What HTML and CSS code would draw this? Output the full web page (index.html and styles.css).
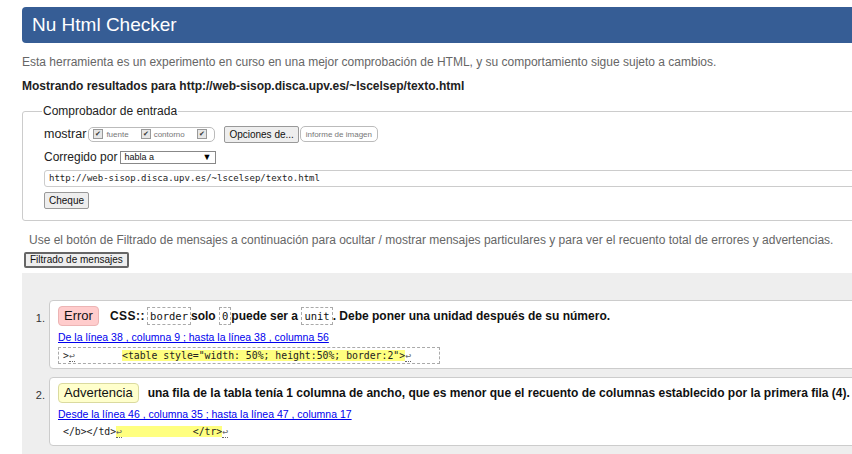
FILE: index.html
```html
<!DOCTYPE html>
<html lang="es">
<head>
<meta charset="utf-8">
<title>Nu Html Checker</title>
<link rel="stylesheet" href="styles.css">
</head>
<body>
<div class="page">
  <h1 class="banner">Nu Html Checker</h1>
  <p class="intro">Esta herramienta es un experimento en curso en una mejor comprobación de HTML, y su comportamiento sigue sujeto a cambios.</p>
  <p class="showing">Mostrando resultados para http://web-sisop.disca.upv.es/~lscelsep/texto.html</p>
  <fieldset class="input-box">
    <legend>Comprobador de entrada</legend>
    <div class="row first">
      <span class="lbl big">mostrar</span>
      <span class="pill checks">
        <label class="chk"><span class="cb">✔</span>fuente</label>
        <label class="chk"><span class="cb">✔</span>contorno</label>
        <label class="chk"><span class="cb">✔</span></label>
      </span>
      <button class="btn">Opciones de...</button>
      <span class="pill img">informe de imagen</span>
    </div>
    <div class="row">
      <span class="lbl">Corregido por</span>
      <span class="select">habla a<span class="arrow">▼</span></span>
    </div>
    <div class="url">http://web-sisop.disca.upv.es/~lscelsep/texto.html</div>
    <button class="btn small">Cheque</button>
  </fieldset>
  <p class="hint">Use el botón de Filtrado de mensajes a continuación para ocultar / mostrar mensajes particulares y para ver el recuento total de errores y advertencias.</p>
  <button class="btn filter">Filtrado de mensajes</button>
  <div class="results">
    <ol class="msgs">
      <li class="msg">
        <span class="num">1.</span>
        <div class="card">
          <p class="title"><span class="badge err">Error</span><span class="text"><b class="css">CSS::</b><code class="cd">border</code>solo <code class="cd">0</code>puede ser a <code class="cd">unit</code>. Debe poner una unidad después de su número.</span></p>
          <p class="loc"><a href="#">De la línea 38 , columna 9 ; hasta la línea 38 , columna 56</a></p>
          <div class="extract dashed">&gt;<span class="lf">↩</span>        <mark>&lt;table style="width: 50%; height:50%; border:2"&gt;</mark><span class="lf">↩</span></div>
        </div>
      </li>
      <li class="msg">
        <span class="num">2.</span>
        <div class="card">
          <p class="title"><span class="badge warn">Advertencia</span><span class="text">una fila de la tabla tenía 1 columna de ancho, que es menor que el recuento de columnas establecido por la primera fila (4).</span></p>
          <p class="loc"><a href="#">Desde la línea 46 , columna 35 ; hasta la línea 47 , columna 17</a></p>
          <div class="extract plain">&lt;/b&gt;&lt;/td&gt;<mark><span class="lf">↩</span>            &lt;/tr&gt;</mark><span class="lf">↩</span></div>
        </div>
      </li>
    </ol>
  </div>
</div>
</body>
</html>
```

FILE: styles.css
```css
html, body {
  margin: 0;
  padding: 0;
  background: #fff;
  overflow: hidden;
}
body {
  font-family: "Liberation Sans", Arial, sans-serif;
  font-size: 12px;
  color: #222;
}
.page {
  width: 900px;
  padding: 7px 0 0 22px;
}
.banner {
  margin: 0;
  background: #365d95;
  color: #fff;
  font-weight: normal;
  font-size: 19px;
  height: 36px;
  line-height: 36px;
  padding-left: 10px;
  border-radius: 4px 0 0 4px;
}
.intro {
  margin: 11px 0 0;
  color: #666;
  line-height: 16px;
}
.showing {
  margin: 8px 0 0;
  font-weight: bold;
  color: #222;
  line-height: 16px;
}
.input-box {
  margin: 10px 0 0;
  border: 1px solid #ccc;
  border-radius: 3px;
  padding: 7px 20px 11px 21px;
  box-sizing: border-box;
  height: 117px;
}
.input-box legend {
  font-size: 12px;
  color: #222;
  padding: 0 1px;
  margin-left: -2px;
}
.row {
  display: flex;
  align-items: center;
  height: 18px;
  margin-bottom: 6px;
}
.row.first { margin-bottom: 5px; }
.lbl {
  font-size: 12px;
  color: #222;
  margin-right: 2px;
}
.lbl.big { font-size: 12.5px; }
.pill {
  display: inline-flex;
  align-items: center;
  border: 1px solid #bbb;
  border-radius: 5px;
  height: 15px;
  box-sizing: border-box;
  font-size: 8px;
  color: #777;
}
.checks {
  width: 127px;
  padding-left: 4px;
}
.chk {
  display: inline-flex;
  align-items: center;
  margin-right: 12px;
}
.chk:last-child { margin-right: 0; }
.cb {
  display: inline-block;
  width: 8px;
  height: 8px;
  border: 1px solid #999;
  background: #e6e6e6;
  font-size: 7px;
  line-height: 8px;
  text-align: center;
  color: #333;
  margin-right: 3px;
}
.btn {
  font-family: "Liberation Sans", Arial, sans-serif;
  font-size: 10px;
  color: #111;
  background: #eee;
  border: 1px solid #999;
  border-radius: 2px;
  padding: 0 4px;
  height: 17px;
  line-height: 15px;
  margin: 0;
}
.row .btn { margin-left: 9px; }
.img {
  margin-left: 1px;
  width: 78px;
  justify-content: center;
  height: 16px;
}
.select {
  display: inline-flex;
  align-items: center;
  justify-content: space-between;
  width: 96px;
  height: 13px;
  box-sizing: border-box;
  border: 1px solid #888;
  font-size: 9px;
  color: #111;
  padding: 0 4px 0 3px;
  margin-left: 1px;
}
.arrow { font-size: 9px; color: #000; }
.url {
  font-family: "DejaVu Sans Mono", monospace;
  font-size: 9px;
  color: #222;
  border: 1px solid #ccc;
  border-radius: 3px;
  height: 17px;
  line-height: 15px;
  box-sizing: border-box;
  padding-left: 4px;
  margin-top: -2px;
  width: 860px;
}
.btn.small {
  margin-top: 5px;
  font-size: 10px;
  height: 17px;
  padding: 0 4px;
}
.hint {
  margin: 11px 0 0 7px;
  color: #666;
  line-height: 16px;
}
.btn.filter {
  margin-top: 4px;
  margin-left: 2px;
  border: 2px solid #666;
  border-radius: 2px;
  font-size: 10px;
  height: 16px;
  line-height: 12px;
  padding: 0 4px;
}
.results {
  background: #eee;
  margin-top: 5px;
  padding: 27px 0 12px;
  height: 200px;
}
.msgs {
  list-style: none;
  margin: 0;
  padding: 0;
}
.msg {
  display: flex;
  align-items: flex-start;
  margin-bottom: 8px;
}
.num {
  width: 27px;
  flex: none;
  text-align: right;
  padding-top: 12px;
  font-size: 11px;
  color: #333;
  padding-right: 4px;
  box-sizing: border-box;
}
.card {
  flex: 1;
  background: #fff;
  border: 1px solid #ccc;
  border-radius: 4px;
  padding: 5px 0 6px 8px;
  height: 69px;
  box-sizing: border-box;
}
.title {
  margin: 0;
  display: flex;
  align-items: center;
  font-weight: bold;
  font-size: 12px;
  color: #111;
  white-space: nowrap;
}
.css {
  letter-spacing: 0.5px;
  margin-right: 2px;
}
.badge {
  font-weight: normal;
  font-size: 13px;
  border-radius: 4px;
  padding: 0 5px;
  height: 18px;
  line-height: 18px;
  color: #111;
  margin-right: 11px;
}
.badge.err {
  background: #ffcccc;
  border: 1px solid #ecb4b4;
}
.badge.warn {
  background: #ffffcc;
  border: 1px solid #dada9f;
  margin-right: 9px;
}
.cd {
  font-family: "DejaVu Sans Mono", monospace;
  font-weight: normal;
  font-size: 10.5px;
  border: 1px dashed #aaa;
  padding: 2px 2px;
  line-height: 15px;
}
.loc {
  margin: 4px 0 0;
  font-size: 10.5px;
  line-height: 14px;
}
.loc a {
  color: #00e;
  text-decoration: underline;
}
.extract {
  margin-top: 3px;
  font-family: "DejaVu Sans Mono", monospace;
  font-size: 9.8px;
  line-height: 15px;
  height: 17px;
  white-space: pre;
  color: #222;
  padding-left: 4px;
  width: 382px;
  box-sizing: border-box;
}
.extract.dashed {
  border: 1px dashed #aaa;
}
.extract.plain {
  padding-left: 5px;
}
mark {
  background: #ffff80;
  color: #222;
}
.lf {
  color: #666;
  border-bottom: 1px dotted #666;
}
```
